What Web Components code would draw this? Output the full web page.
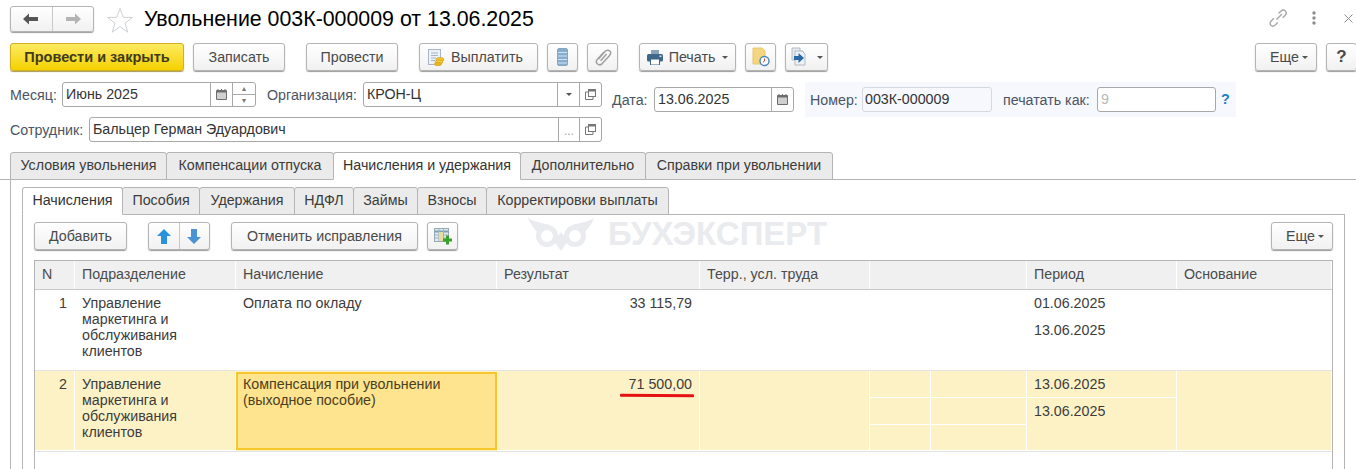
<!DOCTYPE html>
<html lang="ru">
<head>
<meta charset="utf-8">
<title>Увольнение</title>
<style>
html, body { margin: 0; height: 469px; overflow: hidden; background: #fff; }
body { font: 14.25px "Liberation Sans", Arial, sans-serif; color: #3c3c3c; }
</style>
</head>
<body>
<dismissal-form></dismissal-form>
<script>
const ICONS = {
    back: '<svg width="16" height="12" viewBox="0 0 16 12"><path d="M0 6 6 0.5V4H15V8H6V11.5Z" fill="#555"/></svg>',
    forward: '<svg width="16" height="12" viewBox="0 0 16 12"><path d="M16 6 10 0.5V4H1V8H10V11.5Z" fill="#b4b4b4"/></svg>',
    star: '<svg width="28" height="27" viewBox="0 0 28 27"><path d="M14 1.5 17.3 10.4H26.6L19 16 21.8 25.2 14 19.7 6.2 25.2 9 16 1.4 10.4H10.7Z" fill="#fff" stroke="#cfd2d6"/></svg>',
    coins: '<svg width="18" height="18" viewBox="0 0 18 18"><rect x="1.5" y="1.5" width="12" height="15" fill="#eef2f8" stroke="#a9b6c8"/><path d="M4 5H11M4 7.5H11M4 10H9M4 12.5H8" stroke="#a4b4c8"/><ellipse cx="13" cy="11.5" rx="4" ry="2" fill="#f5c52c" stroke="#c99a16" stroke-width=".6"/><ellipse cx="12" cy="14" rx="4" ry="2" fill="#f7cf3e" stroke="#c99a16" stroke-width=".6"/><ellipse cx="11" cy="16" rx="3.6" ry="1.7" fill="#eeb521" stroke="#c99a16" stroke-width=".6"/></svg>',
    stack: '<svg width="11" height="18" viewBox="0 0 11 18"><rect x=".5" y=".5" width="10" height="17" rx="1.5" fill="#85add0" stroke="#8aa6bc"/><path d="M1 4.5H10M1 8H10M1 11.5H10M1 15H10" stroke="#d3e2ee"/></svg>',
    clip: '<svg width="18" height="18" viewBox="0 0 18 18"><path d="M4.5 11 11 3.5C12.5 1.8 15 2 16 3.2 17 4.4 16.7 6.4 15.4 7.8L8.2 15.6C6.8 17 4.6 17 3.3 15.8 2 14.5 2.1 12.7 3.4 11.2L9.8 4.3M6.6 12.7 12.6 6" fill="none" stroke="#a0a0a0" stroke-width="1.5"/></svg>',
    printer: '<svg width="16" height="15" viewBox="0 0 16 15"><path d="M4 0H12V4H4Z" fill="#8aa3b8"/><rect y="4" width="16" height="7.5" rx="1.5" fill="#3f678a"/><rect x="3.5" y="9" width="9" height="6" fill="#fff" stroke="#3f678a"/><rect x="12.5" y="5.5" width="2" height="1.5" fill="#cfe0ec"/></svg>',
    report: '<svg width="20" height="20" viewBox="0 0 20 20"><path d="M2 1H11L14 4V17H2Z" fill="#f3d67f" stroke="#e6c76c"/><circle cx="13.500" cy="14" r="4.500" fill="#fff" stroke="#4a86b8" stroke-width="1.400"/><path d="M13.500 11.500V14L11.800 15.500" stroke="#d8452f" fill="none"/></svg>',
    sheetArrow: '<svg width="20" height="20" viewBox="0 0 20 20"><path d="M2 1H10V4H13V13H2Z" fill="#e4e9f0" stroke="#b4bac4"/><path d="M5 4H12L15 7V18H5Z" fill="#eef1f6" stroke="#b4bac4"/><path d="M4 9H8.500V6L14 11 8.500 16V13H4Z" fill="#2a6aa6"/></svg>',
    up: '<svg width="14" height="15" viewBox="0 0 14 15"><path d="M7 0 14 7H10V15H4V7H0Z" fill="#2a91dc"/></svg>',
    down: '<svg width="14" height="15" viewBox="0 0 14 15"><path d="M7 15 14 8H10V0H4V8H0Z" fill="#4a94d6"/></svg>',
    tableAdd: '<svg width="20" height="20" viewBox="0 0 20 20"><rect x="1.5" y="2.5" width="14" height="13" fill="#dfeaf0" stroke="#96aab6"/><path d="M1.5 5.5H15.5" stroke="#7fa0b0" stroke-width="2"/><path d="M6 3V15M10.500 3V15M2 9H15M2 12H15" stroke="#9fb2bd"/><rect x="6" y="6" width="4" height="9" fill="#e8dc9c"/><path d="M14.500 9.500V18.500M10 14H19" stroke="#3aa02c" stroke-width="3"/></svg>',
    link: '<svg width="20" height="20" viewBox="0 0 20 20"><g fill="none" stroke="#a8a8a8" stroke-width="1.400"><path d="M8.500 11.500 14 6"/><path d="M10.500 5.500 12.800 3.200C14.300 1.800 16.200 1.900 17.300 3 18.400 4.100 18.400 6 17 7.400L14.700 9.700"/><path d="M5.800 10.300 3.200 12.900C1.800 14.400 1.800 16.300 2.900 17.300 4 18.400 5.900 18.300 7.300 17L9.700 14.500"/></g></svg>',
    kebab: '<svg width="4" height="14" viewBox="0 0 4 14"><circle cx="2" cy="2" r="1.700" fill="#8c8c8c"/><circle cx="2" cy="7" r="1.700" fill="#8c8c8c"/><circle cx="2" cy="12" r="1.700" fill="#8c8c8c"/></svg>',
    close: '<svg width="9" height="9" viewBox="0 0 9 9"><path d="M.5 .5 8.500 8.500M8.500 .5 .5 8.500" stroke="#8c8c8c"/></svg>',
    calendar: '<svg width="11" height="11" viewBox="0 0 11 11"><rect y="1" width="11" height="10" rx="1" fill="#6d6d6d"/><rect x="1" y="3.500" width="9" height="6.500" fill="#cfcfcf"/><path d="M2 0V2M5.500 0V2M9 0V2" stroke="#6d6d6d"/></svg>',
    open: '<svg width="11" height="11" viewBox="0 0 11 11"><rect x="3.500" y=".5" width="7" height="7" fill="#fff" stroke="#777"/><path d="M3.500 3H.5V10.500H8V7.500" fill="none" stroke="#777"/><path d="M3.500 1.500H10.500" stroke="#777" stroke-width="2"/></svg>'
};

class UiIcon extends HTMLElement {
    connectedCallback() {
        this.attachShadow({ mode: 'open' });
        this.shadowRoot.innerHTML = '<style>:host{display:inline-flex;align-items:center;justify-content:center;line-height:0}</style>' + ICONS[this.getAttribute('name')];
    }
}
customElements.define('ui-icon', UiIcon);

// button of the command bar: width comes from the attribute
class UiButton extends HTMLElement {
    connectedCallback() {
        this.attachShadow({ mode: 'open' });
        this.shadowRoot.innerHTML = `<style>
            :host { display: inline-flex; flex: none; box-sizing: border-box; height: 28px; align-items: center; justify-content: center; gap: 6px;
                border: 1px solid #b4b4b4; border-radius: 3px; background: linear-gradient(#fff, #f1f1f1); box-shadow: 0 1px 1px #9c9c9c;
                color: #4a4a4a; font-size: 14.25px; white-space: nowrap; }
            :host([primary]) { background: linear-gradient(#fdea62, #f5d100); border-color: #d0b020; color: #3f3a1a; font-weight: bold; font-size: 14.5px; box-shadow: 0 1px 1px #a89a50; }
            :host([plain]) { font-size: 17px; font-weight: bold; color: #4a4a4a; }
            :host([more]) { gap: 2px; padding-left: 6px; }
            :host([lead]) { padding-right: 7px; }
            .caret { width: 0; height: 0; border: 3px solid transparent; border-top: 3px solid #555; border-bottom: 0; margin-left: 1px; }
        </style><slot></slot>${this.hasAttribute('caret') ? '<span class="caret"></span>' : ''}`;
        this.style.width = this.getAttribute('w') + 'px';
    }
}
customElements.define('ui-button', UiButton);

// input box with its side buttons ("cal", "spin", "drop", "dots", "open")
class UiField extends HTMLElement {
    connectedCallback() {
        this.attachShadow({ mode: 'open' });
        const parts = (this.getAttribute('buttons') || '').split(' ').filter(Boolean);
        const side = { 
            cal: '<i><ui-icon name="calendar"></ui-icon></i>',
            spin: '<i class="spin"><b>▴</b><b>▾</b></i>',
            drop: '<i><span class="caret"></span></i>',
            dots: '<i class="dots">...</i>',
            open: '<i><ui-icon name="open"></ui-icon></i>'
        };
        this.shadowRoot.innerHTML = `<style>
            :host { display: flex; flex: none; box-sizing: border-box; height: 25px; border: 1px solid #a8a8a8; border-radius: 3px; background: #fff; color: #333; overflow: hidden; }
            :host([readonly]) { border-color: #d6d9e0; background: #f6f8fe; }
            :host([muted]) { color: #b8b8b8; }
            .text { flex: 1; padding-left: 3px; line-height: 23px; white-space: nowrap; overflow: hidden; }
            :host([readonly]) .text { padding-left: 2px; }
            i { flex: none; width: 21px; border-left: 1px solid #a8a8a8; display: flex; align-items: center; justify-content: center; font-style: normal; }
            .spin { flex-direction: column; width: 22px; }
            .spin b { flex: 1; width: 100%; font: 8px/11px "DejaVu Sans", sans-serif; color: #777; text-align: center; }
            .spin b + b { border-top: 1px solid #a8a8a8; }
            .caret { width: 0; height: 0; border: 3px solid transparent; border-top: 3px solid #555; border-bottom: 0; }
            .dots { color: #a0a0a0; font-size: 12px; padding-top: 3px; box-sizing: border-box; }
        </style><span class="text"><slot></slot></span>${parts.map(p => side[p]).join('')}`;
        this.style.width = this.getAttribute('w') + 'px';
    }
}
customElements.define('ui-field', UiField);

class UiLabeled extends HTMLElement {
    connectedCallback() {
        this.attachShadow({ mode: 'open' });
        this.shadowRoot.innerHTML = `<style>
            :host { display: flex; flex: none; align-items: center; height: 25px; color: #4b5563; white-space: nowrap; }
            span { flex: none; }
        </style><span><slot name="label"></slot></span><slot></slot>`;
        this.shadowRoot.querySelector('span').style.width = this.getAttribute('lw') + 'px';
    }
}
customElements.define('ui-labeled', UiLabeled);

// tab strip, widths and titles are given in attributes: "Title:width|..."
class UiTabs extends HTMLElement {
    connectedCallback() {
        this.attachShadow({ mode: 'open' });
        const active = parseInt(this.getAttribute('active'));
        const tabs = this.getAttribute('tabs').split('|').map((t, i) => {
            const [title, w] = t.split(':');
            return `<div class="tab${i == active ? ' on' : ''}" style="width:${w}px">${title}</div>`;
        }).join('');
        this.shadowRoot.innerHTML = `<style>
            :host { display: flex; box-sizing: border-box; height: 28px; border-bottom: 1px solid #b4b4b4; }
            .tab { box-sizing: border-box; height: 28px; margin-left: -1px; border: 1px solid #b4b4b4; border-radius: 3px 3px 0 0; background: #ebebeb;
                text-align: center; line-height: 25px; color: #3c3c3c; white-space: nowrap; }
            .tab:first-of-type { margin-left: 0; }
            .tab.on { background: #fff; border-bottom-color: #fff; position: relative; color: #333; }
        </style>${tabs}`;
    }
}
customElements.define('ui-tabs', UiTabs);

class DocHeader extends HTMLElement {
    connectedCallback() {
        this.attachShadow({ mode: 'open' });
        this.shadowRoot.innerHTML = `<style>
            :host { display: flex; box-sizing: border-box; height: 43px; padding: 6px 0 0 10px; align-items: flex-start; }
            .nav { display: flex; box-sizing: border-box; width: 84px; height: 26px; border: 1px solid #b4b4b4; border-radius: 3px; background: linear-gradient(#fff, #f1f1f1); box-shadow: 0 1px 1px #9c9c9c; }
            .nav ui-icon { flex: 1; }
            .nav ui-icon + ui-icon { border-left: 1px solid #c8c8c8; }
            .star { margin: 1px 0 0 12px; }
            h1 { margin: 0 0 0 10px; font: 21.35px/26px "Liberation Sans", Arial, sans-serif; color: #000; white-space: nowrap; }
            .tools { margin-left: auto; display: flex; align-items: center; height: 24px; padding-right: 3px; }
            .tools .l { margin-right: 24px; } .tools .k { margin-right: 28px; }
        </style>
        <div class="nav"><ui-icon name="back"></ui-icon><ui-icon name="forward"></ui-icon></div>
        <ui-icon class="star" name="star"></ui-icon>
        <h1>Увольнение 003К-000009 от 13.06.2025</h1>
        <div class="tools"><ui-icon class="l" name="link"></ui-icon><ui-icon class="k" name="kebab"></ui-icon><ui-icon name="close"></ui-icon></div>`;
    }
}
customElements.define('doc-header', DocHeader);

class DocCommands extends HTMLElement {
    connectedCallback() {
        this.attachShadow({ mode: 'open' });
        this.shadowRoot.innerHTML = `<style>
            :host { display: flex; height: 28px; padding-left: 10px; margin-bottom: 11px; }
            ui-button { margin-right: 9px; }
            .g { margin-right: 21px; }
            .end { margin-left: auto; display: flex; }
            .end ui-button:last-child { margin-right: -1px; }
        </style>
        <ui-button w="174" primary>Провести и закрыть</ui-button>
        <ui-button w="92" class="g">Записать</ui-button>
        <ui-button w="92" class="g">Провести</ui-button>
        <ui-button w="119" lead><ui-icon name="coins"></ui-icon>Выплатить</ui-button>
        <ui-button w="31"><ui-icon name="stack"></ui-icon></ui-button>
        <ui-button w="31" class="g"><ui-icon name="clip"></ui-icon></ui-button>
        <ui-button w="97" caret><ui-icon name="printer"></ui-icon>Печать</ui-button>
        <ui-button w="31"><ui-icon name="report"></ui-icon></ui-button>
        <ui-button w="43" caret><ui-icon name="sheetArrow"></ui-icon></ui-button>
        <div class="end">
            <ui-button w="62" caret more>Еще</ui-button>
            <ui-button w="31" plain>?</ui-button>
        </div>`;
    }
}
customElements.define('doc-commands', DocCommands);

class DocFields extends HTMLElement {
    connectedCallback() {
        this.attachShadow({ mode: 'open' });
        this.shadowRoot.innerHTML = `<style>
            :host { display: flex; height: 60px; padding-left: 10px; margin-bottom: 10px; }
            .left { display: flex; flex-direction: column; gap: 10px; width: 592px; flex: none; }
            .row { display: flex; gap: 11px; }
            .date { margin: 5px 0 0 10px; }
            .num { box-sizing: border-box; display: flex; height: 35px; width: 431px; margin-left: 11px; padding: 5px; background: #f6f8fe; }
            .q { color: #1f7fc4; font-weight: bold; margin-left: 5px; line-height: 25px; }
            .next { margin-left: 11px; }
        </style>
        <div class="left">
            <div class="row">
                <ui-labeled lw="52"><span slot="label">Месяц:</span><ui-field w="194" buttons="cal spin">Июнь 2025</ui-field></ui-labeled>
                <ui-labeled lw="96"><span slot="label">Организация:</span><ui-field w="239" buttons="drop open">КРОН-Ц</ui-field></ui-labeled>
            </div>
            <div class="row">
                <ui-labeled lw="79"><span slot="label">Сотрудник:</span><ui-field w="513" buttons="dots open">Бальцер Герман Эдуардович</ui-field></ui-labeled>
            </div>
        </div>
        <ui-labeled class="date" lw="42"><span slot="label">Дата:</span><ui-field w="140" buttons="cal">13.06.2025</ui-field></ui-labeled>
        <div class="num">
            <ui-labeled lw="52"><span slot="label">Номер:</span><ui-field w="130" readonly>003К-000009</ui-field></ui-labeled>
            <ui-labeled class="next" lw="94"><span slot="label">печатать как:</span><ui-field w="119" muted>9</ui-field></ui-labeled>
            <span class="q">?</span>
        </div>`;
    }
}
customElements.define('doc-fields', DocFields);

class DocTable extends HTMLElement {
    connectedCallback() {
        this.attachShadow({ mode: 'open' });
        const sub = 'Управление<br>маркетинга и<br>обслуживания<br>клиентов';
        const row = (cls, n, charge, sum, d1, d2) => `
            <div class="row ${cls}">
                <div class="c n" style="grid-area:1/1/4/2">${n}</div>
                <div class="c" style="grid-area:1/2/4/3">${sub}</div>
                <div class="c charge" style="grid-area:1/3/4/4">${charge}</div>
                <div class="c r" style="grid-area:1/4/4/5">${sum}</div>
                <div class="c" style="grid-area:1/5/4/6"></div>
                <div class="c" style="grid-area:1/6/2/7"></div><div class="c" style="grid-area:1/7/2/8"></div>
                <div class="c" style="grid-area:2/6/3/7"></div><div class="c" style="grid-area:2/7/3/8"></div>
                <div class="c" style="grid-area:3/6/4/7"></div><div class="c" style="grid-area:3/7/4/8"></div>
                <div class="c" style="grid-area:1/8/2/9">${d1}</div>
                <div class="c" style="grid-area:2/8/4/9">${d2}</div>
                <div class="c" style="grid-area:1/9/4/10"></div>
            </div>`;
        this.shadowRoot.innerHTML = `<style>
            :host { display: block; box-sizing: border-box; width: 1299px; height: 300px; border: 1px solid #b4b4b4; border-bottom: 0; color: #3c3c3c; line-height: 16px; }
            .head, .row { display: grid; grid-template-columns: 40px 161px 261px 203px 170px 61px 96px 150px 155px; }
            .head { height: 29px; box-sizing: border-box; background: #f0f0f0; border-bottom: 1px solid #c8c8c8; }
            .head div { padding-left: 7px; line-height: 27px; border-right: 1px solid #fff; color: #4b4b4b; white-space: nowrap; overflow: hidden; }
            .head .wide { grid-column: span 2; }
            .row { grid-template-rows: 27px 27px 26px; height: 80px; border-bottom: 1px solid #e4e4e4; box-sizing: content-box; }
            .c { box-sizing: border-box; padding: 5px 7px 0; white-space: nowrap; min-width: 0; border-right: 1px solid transparent; }
            .n { text-align: right; }
            .r { text-align: right; }
            .row.sel { background: #fdf2c6; }
            .row.sel .c { border-right: 1px solid #fff; border-bottom: 1px solid #fff; }
            .row.sel .charge { background: #fee48f; border: 2px solid #f6c72a; padding: 2px 5px 0; margin: 1px 0 1px 0; color: #4a4020; }
            .row.sel .r { position: relative; }
            .mark { position: absolute; right: 5px; top: 23px; width: 74px; height: 3px; background: #e41212; border-radius: 1px; transform: rotate(.4deg); }
        </style>
        <div class="head">
            <div>N</div><div>Подразделение</div><div>Начисление</div><div>Результат</div><div>Терр., усл. труда</div>
            <div class="wide"></div><div>Период</div><div>Основание</div>
        </div>
        ${row('', 1, 'Оплата по окладу', '33 115,79', '01.06.2025', '13.06.2025')}
        ${row('sel', 2, 'Компенсация при увольнении<br>(выходное пособие)', '71 500,00<span class="mark"></span>', '13.06.2025', '13.06.2025')}`;
    }
}
customElements.define('doc-table', DocTable);

class DocAccruals extends HTMLElement {
    connectedCallback() {
        this.attachShadow({ mode: 'open' });
        this.shadowRoot.innerHTML = `<style>
            :host { display: block; box-sizing: border-box; position: relative; padding: 7px 0 0 11px; height: 260px; width: 1323px; border-left: 1px solid #b4b4b4; border-right: 1px solid #b4b4b4; }
            .bar { display: flex; height: 28px; margin-bottom: 10px; width: 1299px; position: relative; }
            .bar > ui-button { margin-right: 21px; }
            .pair { display: flex; box-sizing: border-box; width: 62px; height: 28px; margin-right: 21px; border: 1px solid #b4b4b4; border-radius: 3px; background: linear-gradient(#fff, #f1f1f1); box-shadow: 0 1px 1px #9c9c9c; }
            .pair ui-icon { flex: 1; }
            .pair ui-icon + ui-icon { border-left: 1px solid #c8c8c8; }
            .bar > .tight { margin-right: 9px; }
            .bar > .more { margin: 0 0 0 auto; }
            .mark { position: absolute; left: 503px; top: 2px; display: flex; align-items: center; gap: 10px; pointer-events: none;
                font: bold 33px/34px "Liberation Sans", Arial, sans-serif; color: #e9ebee; white-space: nowrap; }
        </style>
        <div class="mark">
            <svg width="72" height="34" viewBox="0 0 72 34"><g fill="#e9ebee"><path d="M2 1C8 5 17 6 24 8L12 16C8 12 4 7 2 1Z"/><path d="M68 1C62 5 53 6 46 8L58 16C62 12 66 7 68 1Z"/><path d="M28 24 35 34 42 24 35 15Z"/></g><circle cx="21" cy="19" r="8.500" fill="#fff" stroke="#e9ebee" stroke-width="5"/><circle cx="49" cy="19" r="8.500" fill="#fff" stroke="#e9ebee" stroke-width="5"/></svg>
            <span>БУХЭКСПЕРТ</span>
        </div>
        <div class="bar">
            <ui-button w="93">Добавить</ui-button>
            <div class="pair"><ui-icon name="up"></ui-icon><ui-icon name="down"></ui-icon></div>
            <ui-button w="187" class="tight">Отменить исправления</ui-button>
            <ui-button w="31"><ui-icon name="tableAdd"></ui-icon></ui-button>
            <ui-button w="62" class="more" caret more>Еще</ui-button>
        </div>
        <doc-table></doc-table>`;
    }
}
customElements.define('doc-accruals', DocAccruals);

class DismissalForm extends HTMLElement {
    connectedCallback() {
        this.attachShadow({ mode: 'open' });
        this.shadowRoot.innerHTML = `<style>
            :host { display: block; width: 1356px; height: 469px; overflow: hidden; }
            .outer-tabs { padding-left: 10px; }
            .outer { box-sizing: border-box; margin-left: 10px; padding: 7px 0 0 11px; height: 300px; border-left: 1px solid #b4b4b4; }
            .inner-tabs { width: 1323px; }
        </style>
        <doc-header></doc-header>
        <doc-commands></doc-commands>
        <doc-fields></doc-fields>
        <ui-tabs class="outer-tabs" active="2" tabs="Условия увольнения:157|Компенсации отпуска:168|Начисления и удержания:188|Дополнительно:126|Справки при увольнении:188"></ui-tabs>
        <div class="outer">
            <ui-tabs class="inner-tabs" active="0" tabs="Начисления:101|Пособия:78|Удержания:96|НДФЛ:60|Займы:65|Взносы:70|Корректировки выплаты:183"></ui-tabs>
            <doc-accruals></doc-accruals>
        </div>`;
    }
}
customElements.define('dismissal-form', DismissalForm);
</script>
</body>
</html>
